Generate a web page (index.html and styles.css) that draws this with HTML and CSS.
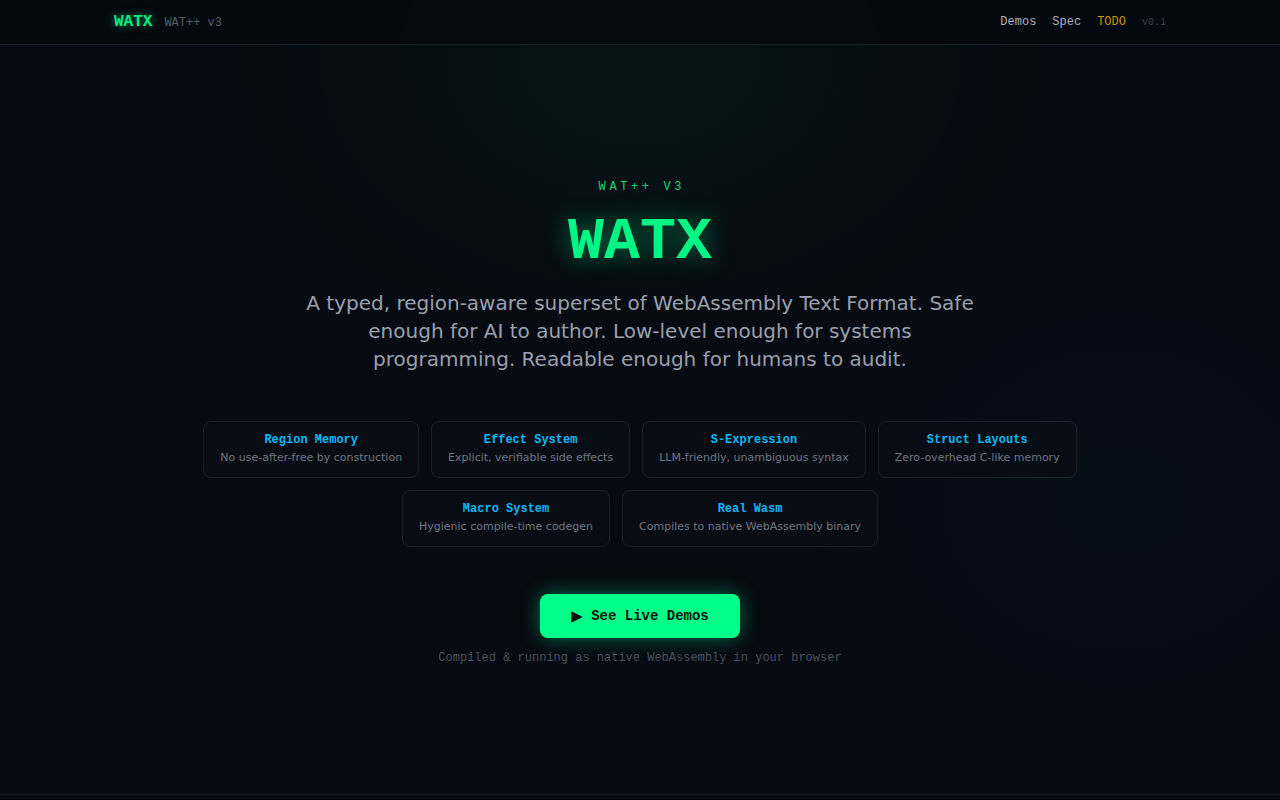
FILE: index.html
```html
<!DOCTYPE html>
<html lang="en">
<head>
<meta charset="utf-8">
<title>WATX — WAT++ v3</title>
<link rel="stylesheet" href="styles.css">
</head>
<body>
<header class="topbar">
  <div class="topbar-inner">
    <div class="brand">
      <span class="brand-logo">WATX</span>
      <span class="brand-sub">WAT++ v3</span>
    </div>
    <nav class="nav">
      <a class="nav-link" href="#">Demos</a>
      <a class="nav-link" href="#">Spec</a>
      <a class="nav-link nav-todo" href="#">TODO</a>
      <span class="nav-version">v0.1</span>
    </nav>
  </div>
</header>
<main class="hero">
  <div class="hero-inner">
    <div class="eyebrow">WAT++ v3</div>
    <h1 class="title">WATX</h1>
    <p class="lead">A typed, region-aware superset of WebAssembly Text Format. Safe enough for AI to author. Low-level enough for systems programming. Readable enough for humans to audit.</p>
    <div class="features">
      <div class="feature"><div class="feature-title">Region Memory</div><div class="feature-desc">No use-after-free by construction</div></div>
      <div class="feature"><div class="feature-title">Effect System</div><div class="feature-desc">Explicit, verifiable side effects</div></div>
      <div class="feature"><div class="feature-title">S-Expression</div><div class="feature-desc">LLM-friendly, unambiguous syntax</div></div>
      <div class="feature"><div class="feature-title">Struct Layouts</div><div class="feature-desc">Zero-overhead C-like memory</div></div>
      <div class="feature"><div class="feature-title">Macro System</div><div class="feature-desc">Hygienic compile-time codegen</div></div>
      <div class="feature"><div class="feature-title">Real Wasm</div><div class="feature-desc">Compiles to native WebAssembly binary</div></div>
    </div>
    <a class="cta" href="#"><span class="cta-icon">▶</span> See Live Demos</a>
    <p class="note">Compiled &amp; running as native WebAssembly in your browser</p>
  </div>
</main>
<footer class="footer"></footer>
</body>
</html>
```

FILE: styles.css
```css
* { box-sizing: border-box; }
html, body { margin: 0; padding: 0; }
body {
  background-color: #060a12;
  background-image:
    radial-gradient(ellipse 420px 300px at 640px 60px, rgba(0, 255, 136, 0.045), rgba(0, 255, 136, 0) 100%),
    radial-gradient(ellipse 380px 320px at 1120px 500px, rgba(0, 140, 200, 0.035), rgba(0, 140, 200, 0) 100%);
  background-repeat: no-repeat;
  color: #c0c8d2;
  font-family: "DejaVu Sans", sans-serif;
}
a { text-decoration: none; }

.topbar {
  height: 45px;
  border-bottom: 1px solid #161e2a;
  background: rgba(4, 7, 13, 0.6);
}
.topbar-inner {
  max-width: 1100px;
  margin: 0 auto;
  padding: 0 24px;
  height: 44px;
  display: flex;
  align-items: center;
  justify-content: space-between;
  font-family: "Liberation Mono", monospace;
}
.brand { display: flex; align-items: baseline; gap: 12px; }
.brand-logo {
  font-size: 16px;
  font-weight: 700;
  color: #00f084;
  text-shadow: 0 0 10px rgba(0, 255, 136, 0.55);
}
.brand-sub { font-size: 12px; color: #565e6b; }
.nav { display: flex; align-items: baseline; gap: 16px; }
.nav-link { font-size: 12px; color: #aab2bd; }
.nav-todo { color: #c99a06; }
.nav-version { font-size: 10px; color: #3a424e; }

.hero {
  min-height: calc(100vh - 51px);
  display: flex;
  align-items: center;
  justify-content: center;
  padding-top: 6px;
}
.hero-inner {
  display: flex;
  flex-direction: column;
  align-items: center;
  text-align: center;
  max-width: 900px;
}
.eyebrow {
  font-family: "Liberation Mono", monospace;
  font-size: 12px;
  line-height: 16px;
  letter-spacing: 0.3em;
  text-transform: uppercase;
  color: #14d878;
  margin-right: -0.3em;
}
.title {
  margin: 14px 0 0;
  font-family: "Liberation Mono", monospace;
  font-size: 60px;
  line-height: 66px;
  font-weight: 700;
  color: #00f585;
  text-shadow: 0 0 24px rgba(0, 255, 136, 0.45);
}
.lead {
  margin: 14px 0 0;
  max-width: 690px;
  font-size: 20px;
  line-height: 28px;
  color: #98a1ad;
}
.features {
  margin-top: 48px;
  display: flex;
  flex-wrap: wrap;
  justify-content: center;
  gap: 12px;
  max-width: 890px;
}
.feature {
  padding: 10px 16px 11px;
  border: 1px solid #19202c;
  border-radius: 8px;
  background: #080d15;
}
.feature-title {
  font-family: "Liberation Mono", monospace;
  font-size: 12px;
  line-height: 16px;
  font-weight: 700;
  color: #0bb8f2;
}
.feature-desc {
  margin-top: 2px;
  font-size: 11px;
  line-height: 16px;
  color: #6e7682;
}
.cta {
  margin-top: 47px;
  display: inline-flex;
  align-items: center;
  justify-content: center;
  width: 200px;
  height: 44px;
  border-radius: 8px;
  background: #00ff88;
  color: #03150c;
  font-family: "Liberation Mono", monospace;
  font-size: 14px;
  font-weight: 700;
  box-shadow: 0 0 20px rgba(0, 255, 136, 0.4);
  white-space: pre;
}
.cta-icon { font-family: "DejaVu Sans", sans-serif; font-size: 15px; }
.note {
  margin: 11px 0 0;
  font-family: "Liberation Mono", monospace;
  font-size: 12px;
  line-height: 18px;
  color: #4a525e;
}
.footer {
  border-top: 1px solid #161e2a;
  height: 60px;
}
```
